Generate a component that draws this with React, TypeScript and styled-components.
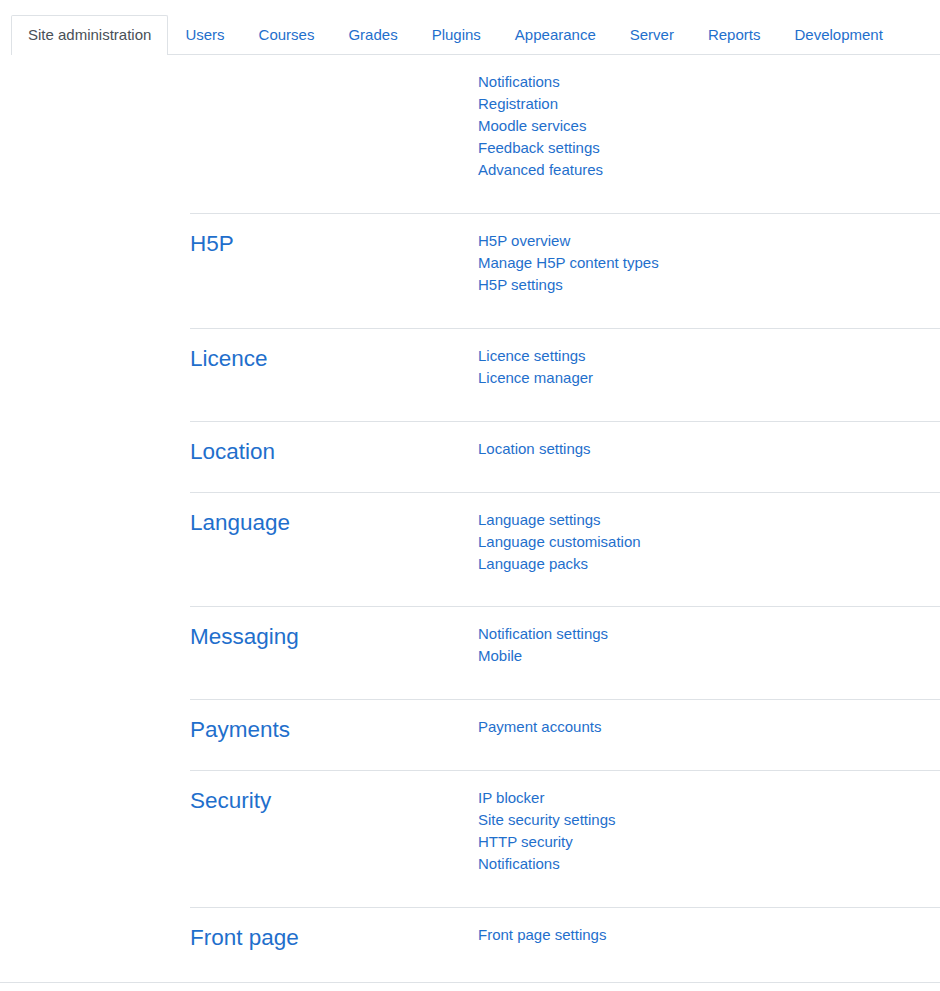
import React from 'react';
import styled, { createGlobalStyle } from 'styled-components';

const GlobalStyle = createGlobalStyle`
  html, body {
    margin: 0;
    padding: 0;
    background: #ffffff;
  }
  body {
    font-family: 'Liberation Sans', Arial, sans-serif;
    font-size: 15px;
    color: #1d2125;
  }
`;

const Page = styled.div`
  width: 940px;
  padding-top: 15px;
  box-sizing: border-box;
`;

const TabBar = styled.nav`
  display: flex;
  margin-left: 11px;
  border-bottom: 1px solid #dee2e6;
`;

const Tab = styled.a<{ $active?: boolean }>`
  display: block;
  padding: 8px 16px;
  line-height: 22px;
  font-size: 15px;
  text-decoration: none;
  border: 1px solid ${p => (p.$active ? '#dee2e6' : 'transparent')};
  border-bottom: none;
  border-radius: 2px 2px 0 0;
  margin-bottom: ${p => (p.$active ? '-1px' : '0')};
  background: ${p => (p.$active ? '#fff' : 'transparent')};
  color: ${p => (p.$active ? '#495057' : '#1f6fcc')};
  ${p => p.$active && 'padding-bottom: 9px;'}
`;

const Sections = styled.div`
  margin-left: 190px;
  padding-top: 16px;
`;

const Section = styled.section<{ $first?: boolean }>`
  display: grid;
  grid-template-columns: 288px 1fr;
  padding-top: ${p => (p.$first ? '0' : '16px')};
  padding-bottom: ${p => (p.$first ? '16.2px' : '15.8px')};
  border-top: ${p => (p.$first ? 'none' : '1px solid #dee2e6')};
`;

const Heading = styled.h4`
  margin: 0;
  font-size: 22.5px;
  line-height: 27px;
  font-weight: 400;
  color: #1f6fcc;
`;

const LinkList = styled.ul`
  list-style: none;
  margin: 0 0 16px;
  padding: 0;
`;

const Item = styled.li`
  line-height: 22px;
  font-size: 15px;
`;

const ItemLink = styled.a`
  color: #1f6fcc;
  text-decoration: none;
`;

const Footer = styled.div`
  margin-top: 4.4px;
  border-top: 1px solid #dee2e6;
  height: 8px;
`;

const tabs = [
  'Site administration',
  'Users',
  'Courses',
  'Grades',
  'Plugins',
  'Appearance',
  'Server',
  'Reports',
  'Development',
];

const sections: { title?: string; links: string[] }[] = [
  {
    links: [
      'Notifications',
      'Registration',
      'Moodle services',
      'Feedback settings',
      'Advanced features',
    ],
  },
  { title: 'H5P', links: ['H5P overview', 'Manage H5P content types', 'H5P settings'] },
  { title: 'Licence', links: ['Licence settings', 'Licence manager'] },
  { title: 'Location', links: ['Location settings'] },
  {
    title: 'Language',
    links: ['Language settings', 'Language customisation', 'Language packs'],
  },
  { title: 'Messaging', links: ['Notification settings', 'Mobile'] },
  { title: 'Payments', links: ['Payment accounts'] },
  {
    title: 'Security',
    links: ['IP blocker', 'Site security settings', 'HTTP security', 'Notifications'],
  },
  { title: 'Front page', links: ['Front page settings'] },
];

const App: React.FC = () => {
  return (
    <Page>
      <GlobalStyle />
      <TabBar>
        {tabs.map((t, i) => (
          <Tab key={t} href="#" $active={i === 0}>
            {t}
          </Tab>
        ))}
      </TabBar>
      <Sections>
        {sections.map((s, i) => (
          <Section key={i} $first={i === 0}>
            <div>{s.title && <Heading>{s.title}</Heading>}</div>
            <LinkList>
              {s.links.map(l => (
                <Item key={l}>
                  <ItemLink href="#">{l}</ItemLink>
                </Item>
              ))}
            </LinkList>
          </Section>
        ))}
      </Sections>
      <Footer />
    </Page>
  );
};

export default App;
